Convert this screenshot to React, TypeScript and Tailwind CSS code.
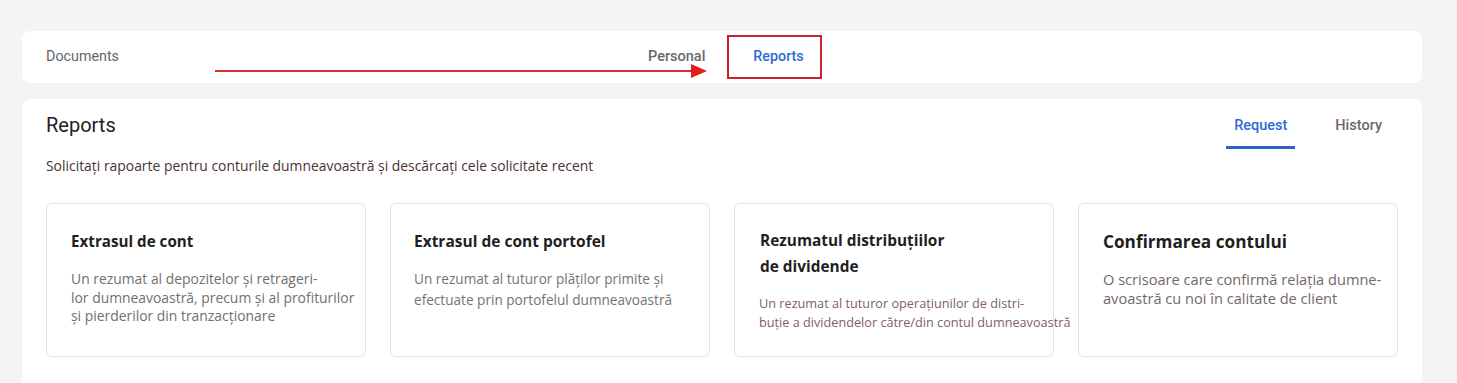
import React from "react";

const cards = [
  {
    title: ["Extrasul de cont"],
    titleClass: "text-[15.2px] leading-[20px]",
    desc: ["Un rezumat al depozitelor și retrageri-", "lor dumneavoastră, precum și al profiturilor", "și pierderilor din tranzacționare"],
    descClass: "text-[13.9px] leading-[18.5px] text-[#707070] mt-[19px]",
    pad: "pl-[24px] pt-[27px]",
  },
  {
    title: ["Extrasul de cont portofel"],
    titleClass: "text-[15.5px] leading-[20px]",
    desc: ["Un rezumat al tuturor plăților primite și", "efectuate prin portofelul dumneavoastră"],
    descClass: "text-[13.6px] leading-[21px] text-[#747474] mt-[17px]",
    pad: "pl-[23px] pt-[27px]",
  },
  {
    title: ["Rezumatul distribuțiilor", "de dividende"],
    titleClass: "text-[15.4px] leading-[26px]",
    desc: ["Un rezumat al tuturor operațiunilor de distri-", "buție a dividendelor către/din contul dumneavoastră"],
    descClass: "text-[12.7px] leading-[19px] text-[#80606a] mt-[14px] -ml-[1px]",
    pad: "pl-[25px] pt-[24px]",
  },
  {
    title: ["Confirmarea contului"],
    titleClass: "text-[17.2px] leading-[22px]",
    desc: ["O scrisoare care confirmă relația dumne-", "avoastră cu noi în calitate de client"],
    descClass: "text-[14.6px] leading-[19px] text-[#726868] mt-[17px]",
    pad: "pl-[24px] pt-[27px]",
  },
];

export default function App() {
  return (
    <div className="min-h-[383px] bg-[#f4f4f4] pl-[22px] pr-[35px] pt-[31px] font-['Roboto',sans-serif]">
      <div className="relative flex h-[52px] items-center rounded-[8px] bg-white">
        <span className="ml-[24px] w-[73px] text-[14.3px] text-[#666]">Documents</span>
        <div className="ml-[529px] flex items-center">
          <span className="w-[57px] text-[14.5px] font-medium text-[#6a6a6a]">Personal</span>
          <div className="ml-[22px] flex h-[44px] w-[95px] items-center justify-center border-2 border-[#c8232c] pl-[8px]">
            <span className="text-[14.3px] font-medium text-[#2f6bd6]">Reports</span>
          </div>
        </div>
        <svg className="absolute left-[193px] top-[32px]" width="500" height="16" viewBox="0 0 500 16">
          <line x1="0" y1="8" x2="478" y2="8" stroke="#d92b2b" strokeWidth="2" />
          <polygon points="476,1 492,8 476,15" fill="#e01e1e" />
        </svg>
      </div>

      <div className="mt-[16px] rounded-t-[8px] bg-white px-[24px] pb-[26px]">
        <div className="flex items-start justify-between">
          <h1 className="pt-[14px] text-[20px] leading-[24px] text-[#222]">Reports</h1>
          <div className="mr-[16px] flex">
            <div className="flex h-[50px] w-[69px] flex-col items-center justify-end border-b-[3px] border-[#2f63c9] pb-[9px]">
              <span className="text-[14.5px] font-medium text-[#2f6bd6]">Request</span>
            </div>
            <div className="ml-[40px] flex h-[50px] flex-col items-center justify-end border-b-[3px] border-transparent pb-[9px]">
              <span className="text-[14.5px] font-medium text-[#6a6a6a]">History</span>
            </div>
          </div>
        </div>
        <p className="mt-[8px] font-['Open_Sans',sans-serif] text-[13.9px] leading-[18px] text-[#4a3333]">
          Solicitați rapoarte pentru conturile dumneavoastră și descărcați cele solicitate recent
        </p>
        <div className="mt-[28px] grid grid-cols-[repeat(4,320px)] gap-[24px] font-['Open_Sans',sans-serif]">
          {cards.map((c) => (
            <div key={c.title[0]} className={`h-[154px] rounded-[6px] border border-[#e2e2e2] bg-white ${c.pad}`}>
              <h3 className={`font-bold text-[#1f1f1f] ${c.titleClass}`}>
                {c.title.map((t) => (
                  <div key={t}>{t}</div>
                ))}
              </h3>
              <p className={`whitespace-nowrap ${c.descClass}`}>
                {c.desc.map((d) => (
                  <span key={d} className="block">{d}</span>
                ))}
              </p>
            </div>
          ))}
        </div>
      </div>
    </div>
  );
}
